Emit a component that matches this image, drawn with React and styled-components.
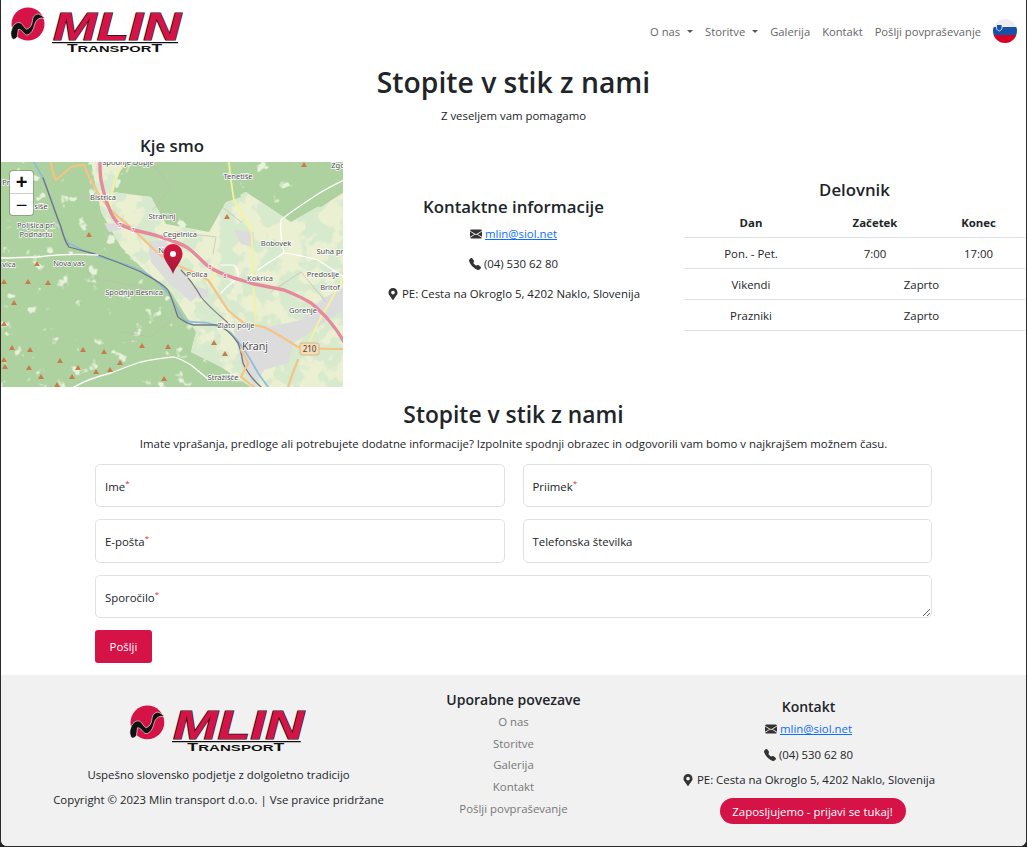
import React from 'react'
import styled, { createGlobalStyle } from 'styled-components'
import { BsEnvelopeFill, BsTelephoneFill } from 'react-icons/bs'
import { FaMapMarkerAlt } from 'react-icons/fa'

const GlobalStyle = createGlobalStyle`
  html, body { margin: 0; padding: 0; background: #222; }
  body { font-family: "Open Sans", "Noto Sans", sans-serif; font-size: 11.4px; color: #212529; }
  * { box-sizing: border-box; }
`

const Frame = styled.div`
  width: 1027px;
  height: 847px;
  overflow: hidden;
  background: #fff;
  border: 1px solid #2b2b2b;
  border-top: 0;
  border-radius: 0 0 7px 7px;
  display: flex;
  flex-direction: column;
`

const Navbar = styled.nav`
  height: 62px;
  display: flex;
  align-items: center;
  justify-content: space-between;
  padding: 0 9px 0 9px;
`

const NavLinks = styled.div`
  display: flex;
  align-items: center;
  gap: 12px;
`

const NavLink = styled.a`
  color: #666;
  font-size: 11.2px;
  display: flex;
  align-items: center;
  &::after {
    content: '';
    display: ${p => (p.$drop ? 'block' : 'none')};
    margin-left: 7px;
    border-top: 3.5px solid #555;
    border-left: 3px solid transparent;
    border-right: 3px solid transparent;
  }
`

const Title = styled.h1`
  margin: 1px 0 0;
  font-size: 28.3px;
  line-height: 38px;
  font-weight: 600;
  text-align: center;
`

const Lead = styled.p`
  margin: 7px 0 0;
  line-height: 16px;
  text-align: center;
`

const InfoRow = styled.section`
  margin-top: 10px;
  display: grid;
  grid-template-columns: 342px 341px 341px;
`

const MapColumn = styled.div`
  display: flex;
  flex-direction: column;
`

const ColumnTitle = styled.h3`
  margin: 0;
  font-size: 16.8px;
  line-height: 24px;
  font-weight: 600;
  text-align: center;
`

const MapBox = styled.div`
  position: relative;
  height: 225px;
  margin-top: 4px;
  overflow: hidden;
`

const ZoomControl = styled.div`
  position: absolute;
  top: 9px;
  left: 9px;
  width: 23px;
  background: #fff;
  border-radius: 3px;
  box-shadow: 0 0 0 1px rgba(0, 0, 0, 0.2);
  display: flex;
  flex-direction: column;
`

const ZoomButton = styled.span`
  height: 22px;
  display: flex;
  align-items: center;
  justify-content: center;
  font: ${p => (p.$bold ? 700 : 400)} 20px/22px "Liberation Sans", sans-serif;
  color: #111;
  & + & { border-top: 1px solid #ccc; }
`

const ContactColumn = styled.div`
  display: flex;
  flex-direction: column;
  align-items: center;
  padding-top: 61px;
`

const ContactList = styled.div`
  margin-top: ${p => p.$top || 7}px;
  display: flex;
  flex-direction: column;
  align-items: center;
  gap: ${p => p.$gap || 14}px;
`

const ContactLine = styled.div`
  display: flex;
  align-items: center;
  gap: 3px;
  line-height: 16px;
  svg { color: #333; flex: none; }
`

const MailLink = styled.a`
  color: #0d6efd;
  text-decoration: underline;
`

const HoursColumn = styled.div`
  padding-top: 44px;
`

const HoursTable = styled.table`
  width: 100%;
  margin-top: 4px;
  border-collapse: collapse;
  table-layout: fixed;
  text-align: center;
  td {
    height: 31px;
    padding: 2px 0 0;
    border-bottom: 1px solid #dee2e6;
  }
`

const HoursHead = styled.th`
  width: ${p => (p.$w ? p.$w + 'px' : 'auto')};
  height: 31px;
  padding: 2px 0 0;
  border-bottom: 1px solid #dee2e6;
  font-weight: 700;
`

const SecondTitle = styled.h2`
  margin: 14px 0 0;
  font-size: 22.8px;
  line-height: 28px;
  font-weight: 600;
  text-align: center;
`

const FormBlock = styled.form`
  width: 837px;
  margin: 0 auto;
  display: grid;
  grid-template-columns: 1fr 1fr;
  column-gap: 18px;
  row-gap: 12px;
  padding-top: 12px;
`

const Field = styled.div`
  position: relative;
  grid-column: ${p => (p.$wide ? '1 / -1' : 'auto')};
  height: ${p => p.$h || 43}px;
`

const Input = styled.input`
  width: 100%;
  height: 100%;
  display: block;
  border: 1px solid #dee2e6;
  border-radius: 5px;
  background: #fff;
  outline: 0;
`

const TextArea = styled.textarea`
  width: 100%;
  height: 100%;
  display: block;
  border: 1px solid #dee2e6;
  border-radius: 5px;
  background: #fff;
  outline: 0;
`

const FieldLabel = styled.label`
  position: absolute;
  left: 10px;
  top: 15px;
  line-height: 16px;
  color: #212529;
`

const Star = styled.sup`
  color: #e8203a;
  font-size: 8px;
  line-height: 0;
`

const SubmitRow = styled.div`
  grid-column: 1 / -1;
`

const SubmitButton = styled.button`
  width: 57px;
  height: 33px;
  border: 0;
  border-radius: 3px;
  background: #d51347;
  color: #fff;
  font: inherit;
`

const Footer = styled.footer`
  margin-top: 12px;
  flex: 1;
  background: #f1f1f1;
  padding: 0 70px;
  display: grid;
  grid-template-columns: repeat(3, minmax(0, 1fr));
`

const FooterCol = styled.div`
  display: flex;
  flex-direction: column;
  align-items: center;
  text-align: center;
  padding-top: ${p => p.$top}px;
`

const FooterText = styled.p`
  margin: ${p => p.$top}px 0 0;
  line-height: 16px;
  white-space: nowrap;
`

const FooterTitle = styled.h5`
  margin: 0;
  font-size: 14px;
  line-height: 20px;
  font-weight: 600;
`

const FooterLinks = styled.div`
  margin-top: 4px;
  display: flex;
  flex-direction: column;
  gap: 5.7px;
`

const FooterLink = styled.a`
  color: #777;
  line-height: 16px;
`

const JobButton = styled.a`
  margin: 10px 0 0 8px;
  width: 186px;
  height: 26px;
  border-radius: 13px;
  background: #d51347;
  color: #fff;
  display: flex;
  align-items: center;
  justify-content: center;
`

const Logo = ({ width }) => (
  <svg width={width} height={width * 48 / 175} viewBox="0 0 175 48">
    <circle cx="18" cy="17" r="16.5" fill="#d51347" />
    <path d="M2.700 32.300C1 30 0.500 27 1 24.700C2 21 3 18.500 5 17C7 15.500 8.500 15.300 10 15.700C12 16.500 13 18.500 14 19.700C15 21 16 22.300 16.700 22.300C19 21.500 21 19.500 21.700 17C22.500 14.500 22.500 12 23.300 10.300C24.500 8 26.500 7 28.300 7C30.500 7.500 33 9.500 35 11.300C33 11 31.500 11 30 11.300C27.500 12 26 14 25 16.300C24 19 23.500 22.500 21.700 24.700C20.500 26.500 18.500 28 16.700 28C15 28 14 26 12.700 24.700C11 23 9.500 22 8.300 22.300C7.700 24.500 8 27.500 7.300 29.700C6 31.500 4.500 32.500 2.700 32.300Z" fill="#111" stroke="#fff" strokeWidth="0.6" />
    <text x="43" y="33" fontFamily="Liberation Sans, sans-serif" fontWeight="700" fontStyle="italic" fontSize="39" textLength="128" lengthAdjust="spacingAndGlyphs" fill="#d51347" stroke="#111" strokeWidth="1.2" style={{ paintOrder: 'stroke' }}>MLIN</text>
    <path d="M42 35.700H168" stroke="#111" strokeWidth="1.2" />
    <text x="57" y="45" fontFamily="Liberation Sans, sans-serif" fontWeight="700" fontSize="8.500" textLength="95" lengthAdjust="spacingAndGlyphs" fill="#111"><tspan fontSize="10">T</tspan>RANSPOR<tspan fontSize="10">T</tspan></text>
  </svg>
)

const Flag = () => (
  <svg width="24" height="24" viewBox="0 0 24 24">
    <defs>
      <clipPath id="flag-clip"><circle cx="12" cy="12" r="12" /></clipPath>
    </defs>
    <g clipPath="url(#flag-clip)">
      <rect width="24" height="8" fill="#eeeeee" />
      <rect y="8" width="24" height="8" fill="#1553a8" />
      <rect y="16" width="24" height="8" fill="#d80027" />
      <path d="M3.500 5.500H9V9C9 11 7 11.500 6.200 12C5.500 11.500 3.500 11 3.500 9Z" fill="#1553a8" stroke="#fff" strokeWidth="0.8" />
    </g>
  </svg>
)

// peaks and labels read off the reference, in map pixels
const peaks = [[303, 3], [226, 55], [88, 73], [36, 102], [3, 120], [27, 120], [47, 121], [13, 141], [3, 162], [11, 186], [29, 188], [82, 188], [103, 190], [141, 184], [167, 185], [213, 181], [224, 192], [3, 198], [4, 205], [28, 206], [40, 215], [59, 199], [77, 206], [95, 210], [109, 208], [119, 201], [71, 215], [56, 223], [163, 217]]

const labels = [
  ['Spodnje Dupje', 127, 0], ['Tenetiše', 237, 14], ['Zgo', 337, 3], ['Bistrica', 102, 35],
  ['Strahinj', 161, 54], ['Cegelnica', 179, 72], ['Bobovek', 275, 81], ['Suha pri', 330, 89],
  ['Kokrica', 259, 116], ['Predoslje', 322, 112], ['Britof', 329, 125], ['Gorenje', 302, 148],
  ['Polica', 196, 112], ['Nova vas', 68, 101], ['vica', 8, 102], ['Spodnja Besnica', 133, 130],
  ['Zlato polje', 235, 163], ['Stražišče', 222, 215], ['Poljšica pri', 35, 63],
  ['Podnartu', 35, 72], ['Pre', 7, 20], ['siše', 40, 44], ['N', 160, 88],
]

const fieldZone = 'M90 0H122L112 30L150 35L165 62L208 70L225 40L245 30L290 60L343 30V225H250L220 205L190 190L195 170L170 130L145 110L120 85L100 50Z'

const MapDrawing = () => (
  <svg width="342" height="225" viewBox="0 0 342 225" style={{ display: 'block' }}>
    <defs>
      <linearGradient id="pin-fill" x1="0" y1="0" x2="0" y2="1">
        <stop offset="0" stopColor="#d9163f" />
        <stop offset="1" stopColor="#a01c38" />
      </linearGradient>
      <clipPath id="field-clip"><path d={fieldZone} /></clipPath>
      <filter id="forest-blotch" x="0" y="0" width="100%" height="100%">
        <feTurbulence type="fractalNoise" baseFrequency="0.05" numOctaves="3" seed="4" />
        <feColorMatrix values="0 0 0 0 0.68  0 0 0 0 0.82  0 0 0 0 0.62  0 0 0 12 -5.400" />
      </filter>
      <filter id="meadow-blotch" x="0" y="0" width="100%" height="100%">
        <feTurbulence type="fractalNoise" baseFrequency="0.07" numOctaves="3" seed="11" />
        <feColorMatrix values="0 0 0 0 0.8  0 0 0 0 0.89  0 0 0 0 0.7  0 0 0 10 -6.700" />
      </filter>
    </defs>
    <rect width="342" height="225" fill="#aed1a0" />
    <rect width="342" height="225" filter="url(#meadow-blotch)" />
    <path d={fieldZone} fill="#ecf0d2" />
    <g clipPath="url(#field-clip)">
      <rect width="342" height="225" filter="url(#forest-blotch)" />
    </g>
    <g fill="#aed1a0">
      <path d="M150 0H228L240 35L225 40L208 55L165 45L135 20Z" />
      <path d="M300 0H343V30L320 45L285 40Z" />
    </g>
    <g fill="#dcdcdc">
      <path d="M147 80L165 78L178 108L200 130L190 140L165 118L150 100Z" />
      <path d="M103 61L120 62L120 68L108 70Z" />
      <path d="M233 168L267 165L300 158L320 138L343 125V148L317 165L293 181L287 201L263 208L253 225L240 201Z" />
      <path d="M233 68L253 70V85L240 82Z" />
      <path d="M193 125L207 127V135L198 137Z" />
    </g>
    <g fill="none" strokeLinecap="round" strokeLinejoin="round">
      <path d="M150 0L170 25L152 48M175 70L215 75L212 92M85 110C110 125 135 118 160 135M180 150L150 175L120 170M270 130L300 110L325 140M240 60L215 40" stroke="#bcbcb0" strokeWidth="0.7" strokeDasharray="2 1" />
      <path d="M33 0C36 6 40 12 43 18C50 35 53 48 58 61C61 70 63 76 67 81C80 88 90 92 103 96C118 100 130 104 143 110C155 118 163 125 170 135C175 145 178 152 183 158C190 161 198 160 207 161C215 163 223 166 230 171C240 182 250 198 257 211L267 225" stroke="#8cbcdc" strokeWidth="1.700" />
      <path d="M42 16C48 32 54 50 60 65C62 73 64 80 68 85C78 88 88 90 97 93C112 98 126 104 140 110C150 116 160 120 167 128C172 138 174 148 177 155C183 160 188 162 193 163H217C225 166 232 174 237 181C240 188 241 195 242 201C246 210 252 218 260 225" stroke="#74757a" strokeWidth="1.300" />
      <path d="M180 108C188 116 195 126 200 135C208 145 218 153 227 161" stroke="#74757a" strokeWidth="1.100" />
      <path d="M0 96C12 96 25 95 37 95C58 92 78 92 97 93M73 225C85 218 98 214 110 211C120 207 130 203 140 200C152 197 163 196 173 195C180 197 185 200 190 203L207 217" stroke="#fff" strokeWidth="1.300" />
      <path d="M220 131C225 125 232 120 237 115C238 110 236 106 233 103H220M257 108C265 102 275 96 283 91C295 92 306 95 317 98L343 115M283 91C280 80 279 68 280 58C292 48 305 40 317 32C325 27 335 22 343 18" stroke="#fff" strokeWidth="1.200" />
      <path d="M123 3C117 10 113 18 112 25C110 32 110 38 110 45M228 0C229 14 231 26 233 38C238 48 245 58 250 68C252 85 252 102 252 118C253 132 254 147 255 161M308 181C312 172 316 163 320 155C328 143 336 128 343 115M208 120L217 110" stroke="#f3f39c" strokeWidth="1.800" />
      <path d="M50 0C51 6 52 13 55 18C60 14 65 9 70 5C75 3 79 3 83 3C85 8 86 11 88 15C94 26 100 36 107 45C115 54 124 60 133 68C141 76 149 84 157 91C164 97 172 101 180 105C190 109 199 113 207 118C214 128 220 138 227 148C232 153 237 157 243 161C250 163 256 164 263 165C275 171 286 178 297 185C312 187 328 187 343 187M240 188C243 192 245 197 247 201C245 206 242 210 240 215C244 218 249 222 253 225M297 198C293 207 290 216 287 225" stroke="#f5c384" strokeWidth="2.200" />
      <path d="M99 0C99 6 99 12 100 18C102 28 104 37 108 46C110 52 113 57 117 61C122 64 127 66 133 68C142 70 151 72 160 75C170 78 179 81 187 86C195 92 201 99 208 105C216 110 224 113 233 116C240 118 246 120 253 122C263 124 273 126 283 128C293 132 302 136 310 141C315 145 320 150 325 155C332 163 338 171 343 180" stroke="#e58a9d" strokeWidth="3.400" />
    </g>
    <g fill="#c87c4c">
      {peaks.map(([x, y]) => <path key={x + '-' + y} d={`M${x} ${y - 3}L${x + 3} ${y + 2}H${x - 3}Z`} />)}
    </g>
    <g fontFamily="Noto Sans, sans-serif" fill="#4a4a4a" textAnchor="middle" stroke="#fff" strokeWidth="1.400" style={{ paintOrder: 'stroke' }}>
      {labels.map(([name, x, y]) => <text key={name} x={x} y={y + 3} fontSize="7.5">{name}</text>)}
      <text x="254" y="188" fontSize="10.7">Kranj</text>
      <text x="119" y="65" fontSize="6" fill="#c03050">7</text>
      <text x="132" y="70" fontSize="6" fill="#c03050">7</text>
      <text x="209" y="107" fontSize="6" fill="#c03050">8</text>
      <text x="224" y="116" fontSize="6" fill="#c03050">8</text>
    </g>
    <rect x="299" y="181" width="19" height="12" rx="2" fill="#f5dcb4" stroke="#d8b98c" />
    <text x="308.500" y="190" textAnchor="middle" fontFamily="Noto Sans, sans-serif" fontSize="8" fill="#444">210</text>
    <path d="M172 82C166.500 82 162.500 86.500 162.500 92C162.500 99 170 105 172 112C174 105 181.500 99 181.500 92C181.500 86.500 177.500 82 172 82Z" fill="url(#pin-fill)" />
    <circle cx="172" cy="92" r="3" fill="#fff" />
  </svg>
)

const Contacts = ({ top, gap }) => (
  <ContactList $top={top} $gap={gap}>
    <ContactLine><BsEnvelopeFill size={12} /><MailLink>mlin@siol.net</MailLink></ContactLine>
    <ContactLine><BsTelephoneFill size={12} />(04) 530 62 80</ContactLine>
    <ContactLine><FaMapMarkerAlt size={12} />PE: Cesta na Okroglo 5, 4202 Naklo, Slovenija</ContactLine>
  </ContactList>
)

export default function App() {
  return (
    <Frame>
      <GlobalStyle />
      <Navbar>
        <Logo width={175} />
        <NavLinks>
          <NavLink $drop>O nas</NavLink>
          <NavLink $drop>Storitve</NavLink>
          <NavLink>Galerija</NavLink>
          <NavLink>Kontakt</NavLink>
          <NavLink>Pošlji povpraševanje</NavLink>
          <Flag />
        </NavLinks>
      </Navbar>

      <Title>Stopite v stik z nami</Title>
      <Lead>Z veseljem vam pomagamo</Lead>

      <InfoRow>
        <MapColumn>
          <ColumnTitle>Kje smo</ColumnTitle>
          <MapBox>
            <MapDrawing />
            <ZoomControl>
              <ZoomButton $bold>+</ZoomButton>
              <ZoomButton>−</ZoomButton>
            </ZoomControl>
          </MapBox>
        </MapColumn>
        <ContactColumn>
          <ColumnTitle>Kontaktne informacije</ColumnTitle>
          <Contacts />
        </ContactColumn>
        <HoursColumn>
          <ColumnTitle>Delovnik</ColumnTitle>
          <HoursTable>
            <thead>
              <tr><HoursHead $w={134}>Dan</HoursHead><HoursHead $w={114}>Začetek</HoursHead><HoursHead>Konec</HoursHead></tr>
            </thead>
            <tbody>
              <tr><td>Pon. - Pet.</td><td>7:00</td><td>17:00</td></tr>
              <tr><td>Vikendi</td><td colSpan="2">Zaprto</td></tr>
              <tr><td>Prazniki</td><td colSpan="2">Zaprto</td></tr>
            </tbody>
          </HoursTable>
        </HoursColumn>
      </InfoRow>

      <SecondTitle>Stopite v stik z nami</SecondTitle>
      <Lead>Imate vprašanja, predloge ali potrebujete dodatne informacije? Izpolnite spodnji obrazec in odgovorili vam bomo v najkrajšem možnem času.</Lead>

      <FormBlock>
        <Field><Input /><FieldLabel>Ime<Star>*</Star></FieldLabel></Field>
        <Field><Input /><FieldLabel>Priimek<Star>*</Star></FieldLabel></Field>
        <Field $h={44}><Input /><FieldLabel>E-pošta<Star>*</Star></FieldLabel></Field>
        <Field $h={44}><Input /><FieldLabel>Telefonska številka</FieldLabel></Field>
        <Field $wide><TextArea /><FieldLabel>Sporočilo<Star>*</Star></FieldLabel></Field>
        <SubmitRow><SubmitButton type="button">Pošlji</SubmitButton></SubmitRow>
      </FormBlock>

      <Footer>
        <FooterCol $top={30}>
          <Logo width={179} />
          <FooterText $top={13}>Uspešno slovensko podjetje z dolgoletno tradicijo</FooterText>
          <FooterText $top={9}>Copyright © 2023 Mlin transport d.o.o. | Vse pravice pridržane</FooterText>
        </FooterCol>
        <FooterCol $top={15}>
          <FooterTitle>Uporabne povezave</FooterTitle>
          <FooterLinks>
            <FooterLink>O nas</FooterLink>
            <FooterLink>Storitve</FooterLink>
            <FooterLink>Galerija</FooterLink>
            <FooterLink>Kontakt</FooterLink>
            <FooterLink>Pošlji povpraševanje</FooterLink>
          </FooterLinks>
        </FooterCol>
        <FooterCol $top={22}>
          <FooterTitle>Kontakt</FooterTitle>
          <Contacts top={4} gap={9.5} />
          <JobButton>Zaposljujemo - prijavi se tukaj!</JobButton>
        </FooterCol>
      </Footer>
    </Frame>
  )
}
